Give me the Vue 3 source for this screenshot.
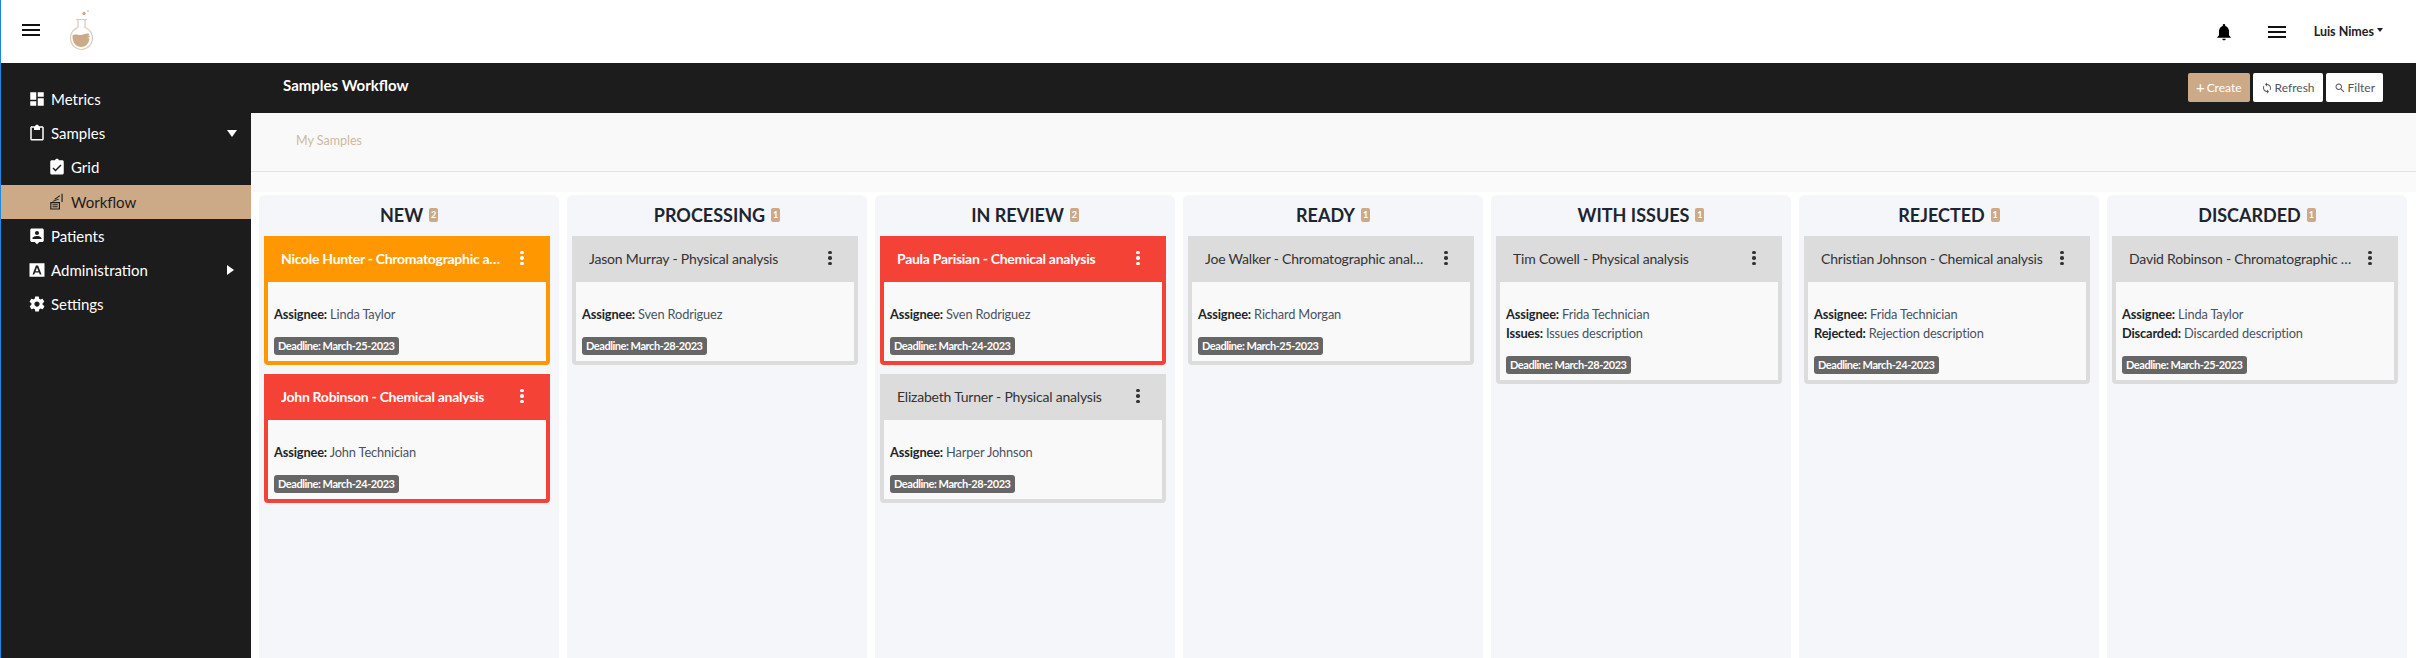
<script setup>
const icons = {
  metrics: 'M3 13h8V3H3v10zm0 8h8v-6H3v6zm10 0h8V11h-8v10zm0-18v6h8V3h-8z',
  samples: 'M19 3h-4.2C14.4 1.8 13.3 1 12 1s-2.4.8-2.8 2H5c-1.1 0-2 .9-2 2v15c0 1.1.9 2 2 2h14c1.1 0 2-.9 2-2V5c0-1.1-.9-2-2-2zm0 17H5V5h3v3h8V5h3v15z',
  grid: 'M19 3h-4.2C14.4 1.8 13.3 1 12 1s-2.4.8-2.8 2H5c-1.1 0-2 .9-2 2v15c0 1.1.9 2 2 2h14c1.1 0 2-.9 2-2V5c0-1.1-.9-2-2-2zm-9 15l-4-4 1.4-1.4 2.6 2.6 6.6-6.6L18 10l-8 8z',
  workflow: 'M3 12h13v10H3zM4.500 13.500h10v7h-10zM6 15h7v1.300H6zM6 17.800h7v1.300H6zM6 10.500l8-3 .5 1.300-8 3zM8.500 8l7-5 .8 1.100-7 5zM18 1h1.500v11H18z',
  patients: 'M19 2H5c-1.100 0-2 .9-2 2v14c0 1.100.9 2 2 2h4l3 3 3-3h4c1.100 0 2-.9 2-2V4c0-1.100-.9-2-2-2zm-7 3.300c1.500 0 2.700 1.200 2.700 2.700s-1.200 2.700-2.700 2.700S9.300 9.500 9.300 8s1.200-2.700 2.700-2.700zM18 16H6v-.9c0-2 4-3.100 6-3.100s6 1.100 6 3.100v.9z',
  admin: 'M2 3h20v18H2V3zm8.600 3L6 18h2.300l1-2.800h5.400l1 2.800H18L13.400 6h-2.800zm1.400 2.600l2 5h-4l2-5z',
  settings: 'M19.400 13c0-.3.1-.6.1-1s0-.7-.1-1l2.100-1.700c.2-.2.2-.4.1-.6l-2-3.500c-.1-.2-.4-.3-.6-.2l-2.500 1c-.5-.4-1.100-.7-1.700-1l-.4-2.600c0-.2-.2-.4-.5-.4h-4c-.2 0-.5.2-.5.4l-.4 2.600c-.6.3-1.200.6-1.700 1l-2.500-1c-.2-.1-.5 0-.6.2l-2 3.500c-.1.2-.1.4.1.6L4.600 11c0 .3-.1.6-.1 1s0 .7.1 1l-2.100 1.700c-.2.2-.2.4-.1.6l2 3.500c.1.2.4.3.6.2l2.500-1c.5.4 1.100.7 1.700 1l.4 2.600c0 .2.2.4.5.4h4c.2 0 .5-.2.5-.4l.4-2.600c.6-.3 1.200-.6 1.700-1l2.500 1c.2.1.5 0 .6-.2l2-3.500c.1-.2.1-.4-.1-.6L19.400 13zM12 15.500c-1.900 0-3.500-1.600-3.500-3.500s1.600-3.500 3.500-3.500 3.500 1.600 3.500 3.500-1.600 3.500-3.500 3.500z'
}

const menu = [
  { label: 'Metrics', icon: 'metrics' },
  { label: 'Samples', icon: 'samples', caret: 'down' },
  { label: 'Grid', icon: 'grid', sub: true },
  { label: 'Workflow', icon: 'workflow', sub: true, active: true },
  { label: 'Patients', icon: 'patients' },
  { label: 'Administration', icon: 'admin', caret: 'right' },
  { label: 'Settings', icon: 'settings' }
]

const columns = [
  { title: 'NEW', cards: [
    { title: 'Nicole Hunter - Chromatographic analysis', tone: 'orange', assignee: 'Linda Taylor', deadline: 'March-25-2023' },
    { title: 'John Robinson - Chemical analysis', tone: 'red', assignee: 'John Technician', deadline: 'March-24-2023' }
  ] },
  { title: 'PROCESSING', cards: [
    { title: 'Jason Murray - Physical analysis', assignee: 'Sven Rodriguez', deadline: 'March-28-2023' }
  ] },
  { title: 'IN REVIEW', cards: [
    { title: 'Paula Parisian - Chemical analysis', tone: 'red', assignee: 'Sven Rodriguez', deadline: 'March-24-2023' },
    { title: 'Elizabeth Turner - Physical analysis', assignee: 'Harper Johnson', deadline: 'March-28-2023' }
  ] },
  { title: 'READY', cards: [
    { title: 'Joe Walker - Chromatographic analysis', assignee: 'Richard Morgan', deadline: 'March-25-2023' }
  ] },
  { title: 'WITH ISSUES', cards: [
    { title: 'Tim Cowell - Physical analysis', assignee: 'Frida Technician', extraLabel: 'Issues', extra: 'Issues description', deadline: 'March-28-2023' }
  ] },
  { title: 'REJECTED', cards: [
    { title: 'Christian Johnson - Chemical analysis', assignee: 'Frida Technician', extraLabel: 'Rejected', extra: 'Rejection description', deadline: 'March-24-2023' }
  ] },
  { title: 'DISCARDED', cards: [
    { title: 'David Robinson - Chromatographic analysis', assignee: 'Linda Taylor', extraLabel: 'Discarded', extra: 'Discarded description', deadline: 'March-25-2023' }
  ] }
]
</script>

<template>
  <div class="app">
    <header class="topbar">
      <div class="burger burger-left"><i></i><i></i><i></i></div>
      <svg class="logo" viewBox="0 0 24 42" width="24" height="42">
        <circle cx="19" cy="1" r="1" fill="#dcc9b5" />
        <circle cx="15" cy="3.500" r="1.700" fill="#cdaa87" />
        <path d="M7 9.500h11M9 10v7.500C4 19.500 1.500 23.500 1.500 28c0 6.500 5 11.500 11 11.500s11-5 11-11.500c0-4.500-3-8.500-7.500-10.500V10" fill="none" stroke="#dcc9b5" stroke-width="1.200" />
        <path d="M3.500 25.500c3-2 5-.5 8-.5 3 0 5-2 8-1.500.8.5 1 1 .5 1.500l-1 .5 2 .5-1 1.500-2 .5 2.500.5c-.5 5-4 8.500-8.500 8.500s-8.500-4-8.500-10.500z" fill="#cdaa87" />
      </svg>
      <div class="topbar-right">
        <svg class="bell" viewBox="0 0 24 24" width="20" height="20"><path d="M12 22c1.100 0 2-.9 2-2h-4c0 1.100.9 2 2 2zm6-6v-5c0-3.100-1.600-5.600-4.500-6.300V4c0-.8-.7-1.500-1.500-1.500s-1.500.7-1.500 1.500v.7C7.600 5.400 6 7.900 6 11v5l-2 2v1h16v-1l-2-2z" fill="#000" /></svg>
        <div class="burger"><i></i><i></i><i></i></div>
        <div class="user">Luis Nimes<span class="user-caret"></span></div>
      </div>
    </header>

    <div class="below">
      <aside class="sidebar">
        <nav>
          <div
            v-for="item in menu"
            :key="item.label"
            class="menu-item"
            :class="{ sub: item.sub, active: item.active }"
          >
            <svg class="menu-icon" viewBox="0 0 24 24" width="18" height="18"><path :d="icons[item.icon]" fill="currentColor" fill-rule="evenodd" /></svg>
            <span class="menu-label">{{ item.label }}</span>
            <span v-if="item.caret" class="caret" :class="item.caret"></span>
          </div>
        </nav>
      </aside>

      <main class="main">
        <div class="page-head">
          <h1>Samples Workflow</h1>
          <div class="actions">
            <button class="btn primary"><span class="plus">+</span> Create</button>
            <button class="btn">
              <svg viewBox="0 0 24 24" width="12" height="12"><path d="M12 4V1L8 5l4 4V6c3.300 0 6 2.700 6 6 0 1-.25 2-.7 2.800l1.500 1.500C19.500 15 20 13.600 20 12c0-4.400-3.600-8-8-8zm0 14c-3.300 0-6-2.700-6-6 0-1 .25-2 .7-2.800L5.200 7.700C4.500 9 4 10.400 4 12c0 4.400 3.600 8 8 8v3l4-4-4-4v3z" fill="#555" /></svg>
              Refresh
            </button>
            <button class="btn">
              <svg viewBox="0 0 24 24" width="12" height="12"><path d="M15.500 14h-.8l-.3-.3c1-1.100 1.600-2.600 1.600-4.200C16 5.900 13.100 3 9.500 3S3 5.900 3 9.500 5.900 16 9.500 16c1.600 0 3.100-.6 4.200-1.600l.3.3v.8l5 5 1.500-1.500-5-5zm-6 0C7 14 5 12 5 9.500S7 5 9.500 5 14 7 14 9.500 12 14 9.500 14z" fill="#555" /></svg>
              Filter
            </button>
          </div>
        </div>

        <div class="tabs-wrap">
          <div class="tabs"><span class="tab">My Samples</span></div>
        </div>

        <div class="board">
          <section v-for="col in columns" :key="col.title" class="column">
            <h2 class="col-title">
              {{ col.title }}
              <span class="count">{{ col.cards.length }}</span>
            </h2>
            <article
              v-for="card in col.cards"
              :key="card.title"
              class="card"
              :class="card.tone"
            >
              <div class="card-head">
                <span class="card-title">{{ card.title }}</span>
                <span class="dots"><i></i><i></i><i></i></span>
              </div>
              <div class="card-body">
                <p class="line"><b>Assignee:</b> {{ card.assignee }}</p>
                <p v-if="card.extra" class="line"><b>{{ card.extraLabel }}:</b> {{ card.extra }}</p>
                <span class="deadline">Deadline: {{ card.deadline }}</span>
              </div>
            </article>
          </section>
        </div>
      </main>
    </div>
  </div>
</template>

<style>
html,
body {
  margin: 0;
  background: #fff;
  overflow: hidden;
}
</style>

<style scoped>
.app {
  width: 2416px;
  height: 658px;
  display: flex;
  flex-direction: column;
  border-left: 1px solid #1e88e5;
  box-sizing: border-box;
  font-family: Lato, "Noto Sans", sans-serif;
  color: #212529;
  overflow: hidden;
}

.topbar {
  height: 63px;
  flex: none;
  display: flex;
  align-items: center;
  background: #fff;
}

.burger {
  width: 18px;
  display: flex;
  flex-direction: column;
  gap: 3px;
}

.burger i {
  display: block;
  height: 2px;
  background: #111;
}

.burger-left {
  margin-left: 21px;
  margin-top: -3px;
}

.logo {
  margin-left: 29px;
  margin-top: -1px;
}

.topbar-right {
  margin-left: auto;
  display: flex;
  align-items: center;
  margin-right: 33px;
}

.bell {
  margin-right: 34px;
}

.user {
  margin-left: 28px;
  font-size: 12.500px;
  font-weight: 700;
  color: #222;
  display: flex;
  align-items: center;
}

.user-caret {
  margin-left: 3px;
  margin-top: -3px;
  border-top: 4px solid #222;
  border-left: 3.500px solid transparent;
  border-right: 3.500px solid transparent;
}

.below {
  flex: 1;
  display: flex;
  min-height: 0;
}

.sidebar {
  width: 250px;
  flex: none;
  background: #1c1c1c;
  padding-top: 19px;
  box-sizing: border-box;
}

.menu-item {
  height: 34.200px;
  display: flex;
  align-items: center;
  padding-left: 27px;
  padding-right: 14px;
  color: #fff;
  font-size: 15px;
}

.menu-item.sub {
  padding-left: 47px;
}

.menu-item.active {
  background: #cdaa87;
  color: #1c1c1c;
}

.menu-icon {
  flex: none;
  margin-right: 5px;
}

.menu-label {
  flex: 1;
}

.caret.down {
  border-top: 7px solid #fff;
  border-left: 5px solid transparent;
  border-right: 5px solid transparent;
}

.caret.right {
  border-left: 7px solid #fff;
  border-top: 5px solid transparent;
  border-bottom: 5px solid transparent;
  margin-right: 3px;
}

.main {
  flex: 1;
  min-width: 0;
  display: flex;
  flex-direction: column;
}

.page-head {
  height: 50px;
  flex: none;
  display: flex;
  align-items: center;
  justify-content: space-between;
  background: #1c1c1c;
  padding-left: 32px;
  padding-right: 33px;
}

.page-head h1 {
  margin: 0 0 6px;
  font-size: 15px;
  font-weight: 700;
  color: #fff;
}

.actions {
  display: flex;
  gap: 3px;
  margin-bottom: 1px;
}

.btn {
  height: 29px;
  padding: 0 8px;
  border: none;
  border-radius: 2px;
  background: #fff;
  color: #555;
  font-family: Lato, sans-serif;
  font-size: 12px;
  display: flex;
  align-items: center;
  gap: 2px;
}

.btn.primary {
  background: #cdaa87;
  color: #fff;
}

.plus {
  font-size: 15px;
  line-height: 1;
}

.tabs-wrap {
  flex: none;
  background: #fafafa;
  padding-bottom: 20px;
}

.tabs {
  height: 59px;
  box-sizing: border-box;
  background: #f9f9f9;
  border-bottom: 1px solid #e2e2e2;
  padding-left: 45px;
  display: flex;
  align-items: center;
  padding-bottom: 3px;
}

.tab {
  font-size: 12.500px;
  color: #d0b8a0;
}

.board {
  flex: 1;
  min-height: 0;
  display: flex;
  gap: 8px;
  background: #fff;
  padding: 3px 0 0 8px;
}

.column {
  width: 300px;
  flex: none;
  box-sizing: border-box;
  background: #f5f6fa;
  border-radius: 6px 6px 0 0;
  padding: 0 5px;
}

.col-title {
  margin: 0;
  height: 41px;
  box-sizing: border-box;
  padding-bottom: 2px;
  display: flex;
  align-items: center;
  justify-content: center;
  gap: 6px;
  font-size: 18px;
  font-weight: 700;
  color: #1c2530;
}

.count {
  width: 9px;
  height: 14px;
  border-radius: 2px;
  background: #cdaa87;
  color: #fff;
  font-size: 9px;
  line-height: 14px;
  text-align: center;
}

.card {
  width: 286px;
  box-sizing: border-box;
  margin-bottom: 9px;
  border: 4px solid #dcdcdc;
  border-radius: 4px;
  background: #f9f9f9;
}

.card-head {
  height: 46px;
  box-sizing: border-box;
  padding-bottom: 2px;
  margin: -4px -4px 0;
  background: #dcdcdc;
  color: #333;
  display: flex;
  align-items: center;
  padding-left: 17px;
  font-size: 14px;
  letter-spacing: -0.2px;
}

.card-title {
  width: 225px;
  white-space: nowrap;
  overflow: hidden;
  text-overflow: ellipsis;
}

.dots {
  margin-left: 14px;
  display: flex;
  flex-direction: column;
  gap: 2px;
}

.dots i {
  width: 3.500px;
  height: 3.500px;
  border-radius: 50%;
  background: currentColor;
}

.card.orange {
  border-color: #ff9800;
}

.card.red {
  border-color: #f44336;
}

.orange .card-head,
.red .card-head {
  color: #fff;
  font-weight: 700;
  letter-spacing: -0.28px;
}

.orange .card-head {
  background: #ff9800;
}

.red .card-head {
  background: #f44336;
}

.card-body {
  padding: 23px 6px 6px;
}

.line {
  margin: 0;
  height: 18.500px;
  line-height: 18.500px;
  font-size: 12.800px;
  letter-spacing: -0.15px;
  color: #4a5260;
  white-space: nowrap;
}

.line b {
  color: #212529;
}

.deadline {
  display: block;
  width: fit-content;
  height: 18px;
  line-height: 18px;
  margin-top: 13.500px;
  padding: 0 4px;
  border-radius: 3px;
  background: #666;
  color: #fff;
  font-size: 11px;
  font-weight: 700;
  letter-spacing: -0.45px;
}
</style>
